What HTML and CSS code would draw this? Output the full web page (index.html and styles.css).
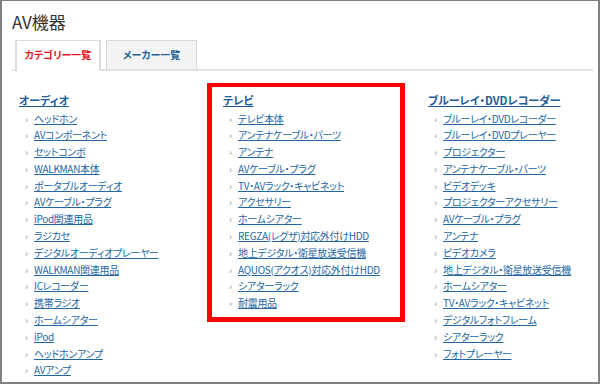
FILE: index.html
```html
<!DOCTYPE html>
<html lang="ja">
<head>
<meta charset="utf-8">
<link rel="stylesheet" href="styles.css">
</head>
<body>
<div class="frame">
  <h1 class="title">AV機器</h1>
  <div class="tabs">
    <div class="tab active">カテゴリー一覧</div>
    <div class="tab">メーカー一覧</div>
  </div>
  <div class="cols">
    <div class="col">
      <a class="head" href="#">オーディオ</a>
      <ul class="list">
        <li><a href="#">ヘッドホン</a></li>
        <li><a href="#">AVコンポーネント</a></li>
        <li><a href="#">セットコンボ</a></li>
        <li><a href="#">WALKMAN本体</a></li>
        <li><a href="#">ポータブルオーディオ</a></li>
        <li><a href="#">AVケーブル・プラグ</a></li>
        <li><a href="#">iPod関連用品</a></li>
        <li><a href="#">ラジカセ</a></li>
        <li><a href="#">デジタルオーディオプレーヤー</a></li>
        <li><a href="#">WALKMAN関連用品</a></li>
        <li><a href="#">ICレコーダー</a></li>
        <li><a href="#">携帯ラジオ</a></li>
        <li><a href="#">ホームシアター</a></li>
        <li><a href="#">iPod</a></li>
        <li><a href="#">ヘッドホンアンプ</a></li>
        <li><a href="#">AVアンプ</a></li>
      </ul>
    </div>
    <div class="col highlight">
      <a class="head" href="#">テレビ</a>
      <ul class="list">
        <li><a href="#">テレビ本体</a></li>
        <li><a href="#">アンテナケーブル・パーツ</a></li>
        <li><a href="#">アンテナ</a></li>
        <li><a href="#">AVケーブル・プラグ</a></li>
        <li><a href="#">TV・AVラック・キャビネット</a></li>
        <li><a href="#">アクセサリー</a></li>
        <li><a href="#">ホームシアター</a></li>
        <li><a href="#">REGZA(レグザ)対応外付けHDD</a></li>
        <li><a href="#">地上デジタル・衛星放送受信機</a></li>
        <li><a href="#">AQUOS(アクオス)対応外付けHDD</a></li>
        <li><a href="#">シアターラック</a></li>
        <li><a href="#">耐震用品</a></li>
      </ul>
    </div>
    <div class="col">
      <a class="head" href="#">ブルーレイ・DVDレコーダー</a>
      <ul class="list">
        <li><a href="#">ブルーレイ・DVDレコーダー</a></li>
        <li><a href="#">ブルーレイ・DVDプレーヤー</a></li>
        <li><a href="#">プロジェクター</a></li>
        <li><a href="#">アンテナケーブル・パーツ</a></li>
        <li><a href="#">ビデオデッキ</a></li>
        <li><a href="#">プロジェクターアクセサリー</a></li>
        <li><a href="#">AVケーブル・プラグ</a></li>
        <li><a href="#">アンテナ</a></li>
        <li><a href="#">ビデオカメラ</a></li>
        <li><a href="#">地上デジタル・衛星放送受信機</a></li>
        <li><a href="#">ホームシアター</a></li>
        <li><a href="#">TV・AVラック・キャビネット</a></li>
        <li><a href="#">デジタルフォトフレーム</a></li>
        <li><a href="#">シアターラック</a></li>
        <li><a href="#">フォトプレーヤー</a></li>
      </ul>
    </div>
  </div>
</div>
</body>
</html>
```

FILE: styles.css
```css
html, body {
  margin: 0;
  padding: 0;
  background: #fff;
}
body {
  font-family: "Noto Sans CJK JP", "Noto Sans", sans-serif;
  font-feature-settings: "palt";
}
.frame {
  width: 600px;
  height: 384px;
  box-sizing: border-box;
  border: 2px solid #808080;
  border-top-width: 1px;
  overflow: hidden;
  background: #fff;
}
.title {
  margin: 0;
  padding: 11px 0 0 10px;
  font-size: 17px;
  line-height: 20px;
  font-weight: normal;
  color: #333;
}
.tabs {
  display: flex;
  gap: 5px;
  margin: 8px 5px 0 10px;
  padding-left: 3px;
  border-bottom: 2px solid #e2e2e2;
  height: 29px;
}
.tab {
  box-sizing: border-box;
  height: 29px;
  border: 1px solid #d6d6d6;
  border-bottom: none;
  background: #f3f3f3;
  color: #1f5f95;
  font-size: 10px;
  font-weight: bold;
  display: flex;
  align-items: center;
  justify-content: center;
  width: 91px;
  padding-bottom: 2px;
}
.tab.active {
  width: 86px;
  height: 31px;
  background: #fff;
  color: #e8141b;
  border-width: 1px 2px 0 2px;
  border-color: #dcdcdc;
  padding-bottom: 4px;
}
.cols {
  display: grid;
  grid-template-columns: 204px 205px 1fr;
  margin-top: 21px;
  padding-left: 17px;
}
.col {
  position: relative;
}
.highlight::before {
  content: "";
  position: absolute;
  left: -16px;
  top: -9px;
  width: 198px;
  height: 239px;
  box-sizing: border-box;
  border: 5px solid #ff0000;
  border-top-width: 4px;
  pointer-events: none;
}
.head {
  display: block;
  font-size: 11px;
  font-weight: bold;
  line-height: 17px;
  color: #1d5c96;
  text-decoration: underline;
  margin-bottom: 1.5px;
}
.list {
  list-style: none;
  margin: 0;
  padding: 0 0 0 6px;
}
.list li {
  height: 16.8px;
  line-height: 16.8px;
  font-size: 10px;
  display: flex;
  align-items: center;
}
.list li::before {
  content: "›";
  color: #999;
  font-size: 10px;
  width: 9px;
  flex: none;
}
.list a {
  color: #2366a2;
  text-decoration: underline;
  white-space: nowrap;
  letter-spacing: -0.3px;
}
```
